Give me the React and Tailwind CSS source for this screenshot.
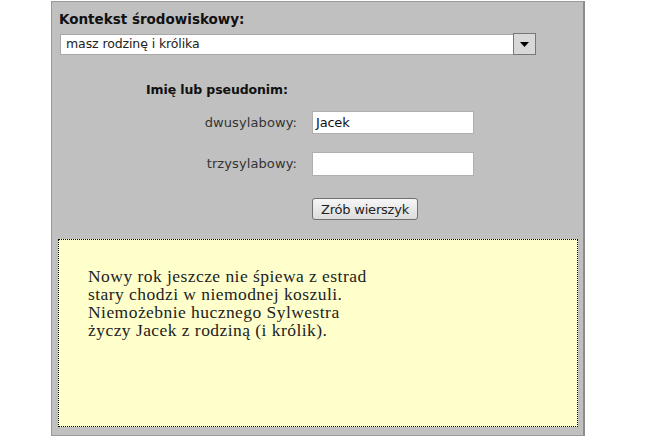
import React from 'react';

const sans = { fontFamily: '"DejaVu Sans", Tahoma, Verdana, sans-serif' };

export default function App() {
  return (
    <div className="w-[664px] h-[442px] bg-white">
      <div
        className="ml-[51px] mt-[1px] w-[534px] h-[435px] border border-[#999] border-r-2 border-r-[#8c8c8c] bg-[#c0c0c0] flex flex-col"
        style={sans}
      >
        <div className="pl-[7px] pt-[9px] text-[13.5px] font-bold text-[#111] leading-[16px]">
          Kontekst środowiskowy:
        </div>

        {/* select */}
        <div className="ml-[8px] mt-[7px] flex h-[21px] w-[476px]">
          <div className="flex-1 bg-white border border-[#a8a8a8] border-r-0 flex items-center pl-[5px] text-[12.5px] text-[#222] tracking-[-0.1px]">
            masz rodzinę i królika
          </div>
          <div className="w-[23px] h-[22px] -mt-[1px] border border-[#777] bg-[#d8d8d8] flex items-center justify-center">
            <svg width="9" height="5" viewBox="0 0 9 5">
              <path d="M0 0h9L4.5 5z" fill="#000" />
            </svg>
          </div>
        </div>

        <div className="ml-[94px] mt-[27px] text-[12.5px] font-bold text-[#111] leading-[16px] tracking-[-0.1px]">
          Imię lub pseudonim:
        </div>

        <div className="mt-[13px] grid grid-cols-[245px_162px] gap-x-[15px] gap-y-[18px] items-center text-[13px] text-[#333] tracking-[0.1px]">
          <div className="text-right">dwusylabowy:</div>
          <div className="h-[23px] bg-white border border-[#b0b0b0] flex items-center pl-[3px] text-[#111] tracking-[-0.2px]">Jacek</div>
          <div className="text-right">trzysylabowy:</div>
          <div className="h-[24px] bg-white border border-[#b0b0b0]"></div>
          <div></div>
          <div className="pt-[4px]">
            <button className="h-[22px] w-[106px] rounded-[3px] border border-[#707070] bg-gradient-to-b from-[#f6f6f6] to-[#dcdcdc] text-[13px] text-[#222] tracking-[-0.2px] leading-none">
              Zrób wierszyk
            </button>
          </div>
        </div>

        <div className="ml-[6px] mt-[19px] w-[520px] h-[188px] border border-dotted border-black bg-[#ffffcc] pl-[29px] pt-[27px] text-[17.5px] leading-[18px] text-[#222] tracking-[0.45px]" style={{ fontFamily: '"Liberation Serif", "Times New Roman", serif' }}>
          <p>Nowy rok jeszcze nie śpiewa z estrad</p>
          <p>stary chodzi w niemodnej koszuli.</p>
          <p>Niemożebnie hucznego Sylwestra</p>
          <p>życzy Jacek z rodziną (i królik).</p>
        </div>
      </div>
    </div>
  );
}
